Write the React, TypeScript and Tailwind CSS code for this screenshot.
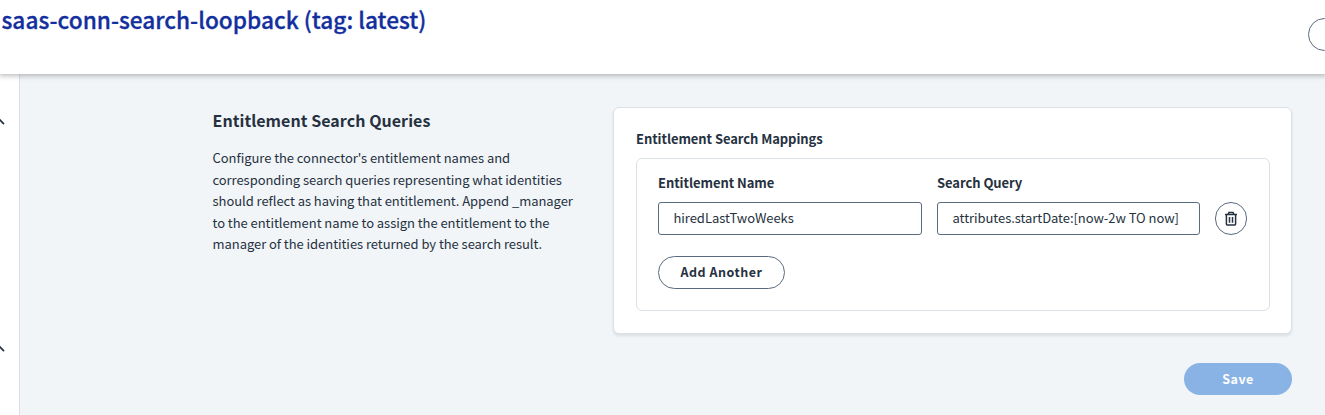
import React from "react";

function CollapseChevron() {
  return (
    <svg className="block h-[8px] w-[6px]" viewBox="0 0 6 8" fill="none" stroke="#263140" strokeWidth="1.7">
      <path d="M-4 6.5 L0 2 L4 6.2" />
    </svg>
  );
}

function TrashIcon() {
  return (
    <svg className="block h-4 w-4" viewBox="0 0 16 16" fill="none" stroke="#263140" strokeWidth="1.5">
      <path d="M2 3.5H14" />
      <path d="M5.2 3.4L5.9 1.4H10.1L10.8 3.4" />
      <path d="M3.4 3.5V13.1Q3.4 14 4.3 14H11.7Q12.6 14 12.6 13.1V3.5" />
      <path d="M6.5 5.9V11.7M9.5 5.9V11.7" />
    </svg>
  );
}

type FieldProps = { label: string; value: string; className: string };

function Field({ label, value, className }: FieldProps) {
  return (
    <label className={className}>
      <span className="block h-5 text-[13px] leading-5 font-bold tracking-[-0.06px] whitespace-nowrap">{label}</span>
      <input
        className="mt-[9px] block h-[33px] w-full rounded-[3px] border border-[#5a6b7f] bg-white px-[14.5px] pb-[2px] text-[13px] tracking-[-0.05px] text-[#263140] outline-none"
        defaultValue={value}
      />
    </label>
  );
}

export default function App() {
  return (
    <div className="flex h-[415px] w-full flex-col overflow-hidden bg-[#f1f5f8] font-['Noto_Sans_CJK_SC',sans-serif] text-[#263140]">
      <header className="z-10 flex h-[74px] shrink-0 justify-between bg-white shadow-[0_1px_5px_1px_rgba(0,0,0,0.25)]">
        <h1 className="pt-1 pl-[1.5px] text-[22.65px] leading-8 font-medium whitespace-nowrap text-[#132f9e] [-webkit-text-stroke:0.3px_#132f9e]">
          saas-conn-search-loopback (tag: latest)
        </h1>
        <button className="mt-[18px] -mr-[60px] h-[33px] w-[77px] shrink-0 rounded-full border border-[#5a6b7f]" aria-label="Actions" />
      </header>
      <div className="flex min-h-0 flex-1">
        <aside className="w-5 shrink-0 border-r border-[#dadfe4] bg-white pt-[44px]">
          <CollapseChevron />
          <div className="mt-[219px]">
            <CollapseChevron />
          </div>
        </aside>
        <main className="flex flex-1 pt-[33px] pl-[192.5px]">
          <section className="w-[401px] shrink-0">
            <h2 className="text-[16px] leading-[26px] font-bold tracking-[0.05px]">Entitlement Search Queries</h2>
            <p className="mt-[14px] text-[13px] leading-[21.5px] tracking-[-0.05px] whitespace-nowrap">
              Configure the connector's entitlement names and
              <br />
              corresponding search queries representing what identities
              <br />
              should reflect as having that entitlement. Append _manager
              <br />
              to the entitlement name to assign the entitlement to the
              <br />
              manager of the identities returned by the search result.
            </p>
          </section>
          <section className="-ml-[0.5px] flex w-[679px] flex-col items-end">
            <div className="h-[227px] w-full rounded-[6px] border border-[#dce1e6] bg-white px-[22px] pt-[21px] shadow-[0_2px_3px_rgba(0,0,0,0.09)]">
              <h3 className="text-[13px] leading-5 font-bold tracking-[-0.07px]">Entitlement Search Mappings</h3>
              <div className="mt-[9px] h-[153px] w-[634px] rounded-[6px] border border-[#dce1e6] px-[21px] pt-[14px]">
                <div className="flex items-end">
                  <Field label="Entitlement Name" value="hiredLastTwoWeeks" className="w-[264px]" />
                  <Field label="Search Query" value="attributes.startDate:[now-2w TO now]" className="ml-[15px] w-[263px]" />
                  <button className="ml-[15px] flex h-[33px] w-8 items-center justify-center rounded-full border border-[#5a6b7f]" aria-label="Delete">
                    <TrashIcon />
                  </button>
                </div>
                <button className="mt-[21px] block h-[33px] w-[127px] rounded-full border border-[#5a6b7f] pb-px text-[12.5px] font-bold tracking-[0.5px] whitespace-nowrap">
                  Add Another
                </button>
              </div>
            </div>
            <button className="mt-[29px] h-8 w-[108px] rounded-full bg-[#89b3e5] text-[12.5px] font-bold tracking-[0.5px] text-white">
              Save
            </button>
          </section>
        </main>
      </div>
    </div>
  );
}
